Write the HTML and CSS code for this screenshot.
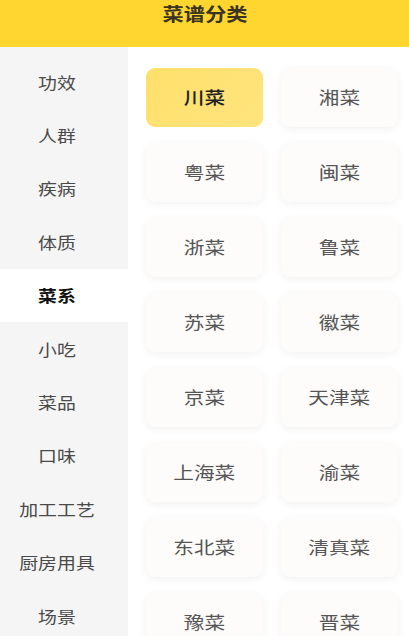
FILE: index.html
```html
<!DOCTYPE html>
<html lang="zh-CN">
<head>
<meta charset="utf-8">
<title>菜谱分类</title>
<link rel="stylesheet" href="styles.css">
</head>
<body>
<div class="page">
  <header class="topbar"><span class="wide">菜谱分类</span></header>
  <div class="main">
    <nav class="side">
      <div class="side-item"><span class="wide">功效</span></div>
      <div class="side-item"><span class="wide">人群</span></div>
      <div class="side-item"><span class="wide">疾病</span></div>
      <div class="side-item"><span class="wide">体质</span></div>
      <div class="side-item active"><span class="wide">菜系</span></div>
      <div class="side-item"><span class="wide">小吃</span></div>
      <div class="side-item"><span class="wide">菜品</span></div>
      <div class="side-item"><span class="wide">口味</span></div>
      <div class="side-item"><span class="wide">加工工艺</span></div>
      <div class="side-item"><span class="wide">厨房用具</span></div>
      <div class="side-item"><span class="wide">场景</span></div>
    </nav>
    <section class="grid">
      <div class="card selected"><span class="wide">川菜</span></div>
      <div class="card"><span class="wide">湘菜</span></div>
      <div class="card"><span class="wide">粤菜</span></div>
      <div class="card"><span class="wide">闽菜</span></div>
      <div class="card"><span class="wide">浙菜</span></div>
      <div class="card"><span class="wide">鲁菜</span></div>
      <div class="card"><span class="wide">苏菜</span></div>
      <div class="card"><span class="wide">徽菜</span></div>
      <div class="card"><span class="wide">京菜</span></div>
      <div class="card"><span class="wide">天津菜</span></div>
      <div class="card"><span class="wide">上海菜</span></div>
      <div class="card"><span class="wide">渝菜</span></div>
      <div class="card"><span class="wide">东北菜</span></div>
      <div class="card"><span class="wide">清真菜</span></div>
      <div class="card"><span class="wide">豫菜</span></div>
      <div class="card"><span class="wide">晋菜</span></div>
    </section>
  </div>
</div>
</body>
</html>
```

FILE: styles.css
```css
* { box-sizing: border-box; }
html, body {
  margin: 0;
  padding: 0;
  background: #ffffff;
  font-family: "Noto Sans CJK SC", "Noto Sans", sans-serif;
}
.page {
  width: 409px;
  height: 636px;
  overflow: hidden;
  display: flex;
  flex-direction: column;
}
.wide {
  display: inline-block;
  transform: scaleX(1.18);
}
.topbar {
  height: 47px;
  flex: none;
  background: #ffd52f;
  display: flex;
  justify-content: center;
  align-items: flex-start;
  padding-top: 1px;
  font-size: 18px;
  line-height: 24px;
  font-weight: 700;
  color: #3a3320;
}
.main {
  flex: 1;
  display: flex;
  min-height: 0;
}
.side {
  width: 128px;
  flex: none;
  background: #f5f5f5;
  padding-top: 8px;
  display: flex;
  flex-direction: column;
}
.side-item {
  height: 53.4px;
  flex: none;
  display: flex;
  align-items: center;
  justify-content: center;
  padding-right: 13px;
  font-size: 16px;
  color: #4a4a4a;
}
.side-item.active {
  background: #ffffff;
  color: #111111;
  font-weight: 700;
  font-size: 16px;
}
.grid {
  flex: 1;
  display: grid;
  grid-template-columns: 117px 117px;
  grid-auto-rows: 59px;
  column-gap: 18px;
  row-gap: 16px;
  padding: 21px 11px 0 18px;
  align-content: start;
}
.card {
  background: #fdfcfb;
  border-radius: 9px;
  box-shadow: 0 2px 8px rgba(0, 0, 0, 0.06);
  display: flex;
  align-items: center;
  justify-content: center;
  padding-bottom: 3px;
  font-size: 17.5px;
  color: #555555;
}
.card.selected {
  background: linear-gradient(135deg, #ffe06b, #ffe47e);
  box-shadow: none;
  color: #222222;
  font-weight: 500;
}
```
